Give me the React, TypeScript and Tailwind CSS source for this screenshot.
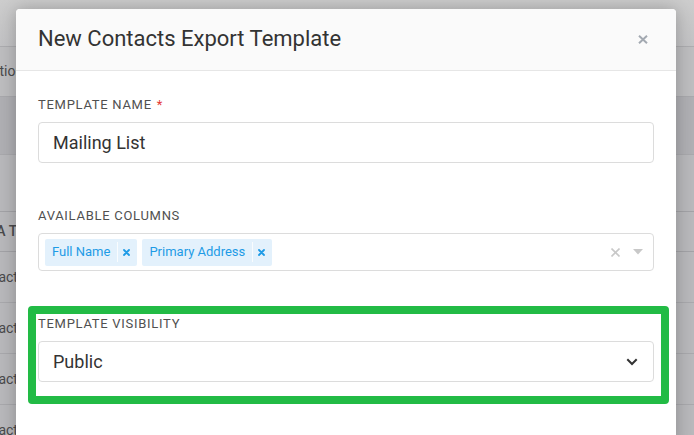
import React from 'react'

const rowText = 'text-[14px] text-[#4a4a4c] whitespace-nowrap'

const TagX = () => (
  <svg width="7" height="7" viewBox="0 0 7 7" className="block">
    <path d="M1 1 L6 6 M6 1 L1 6" stroke="#1e9be6" strokeWidth="1.8" strokeLinecap="round" />
  </svg>
)

const Tag: React.FC<{ label: string }> = ({ label }) => (
  <div className="flex h-[27px] items-center rounded-[2px] bg-[#e3f1fc] text-[13px] text-[#1e9be6]">
    <span className="pl-[7px] pr-[7px]">{label}</span>
    <span className="h-[20px] w-px bg-white/80" />
    <span className="pl-[5px] pr-[7px]">
      <TagX />
    </span>
  </div>
)

const FieldLabel: React.FC<{ children: React.ReactNode; required?: boolean }> = ({
  children,
  required,
}) => (
  <label className="mb-[9px] block text-[13px] leading-[16px] tracking-[0.055em] text-[#505050] uppercase">
    {children}
    {required && <span className="ml-[5px] text-[#e53935]">*</span>}
  </label>
)

export default function App() {
  return (
    <div className="relative h-[435px] w-[694px] overflow-hidden bg-[#b8b8bb] font-['Roboto','Liberation_Sans',sans-serif]">
      {/* page behind the overlay */}
      <div className="flex flex-col">
        <div className="h-[47px] bg-gradient-to-b from-[#cdcdcd] to-[#c3c3c5] border-b border-[#adadb0]" />
        <div className="flex h-[50px] items-center bg-[#bebec0] border-b border-[#a9a9ad]">
          <span className={`${rowText} -ml-[18px]`}>Options</span>
        </div>
        <div className="h-[58px] bg-[#b0b0b4] border-b border-[#a9a9ad]" />
        <div className="h-[57px] bg-[#b9b9bc] border-b border-[#a3a3a7]" />
        <div className="flex h-[40px] items-center bg-[#b9b9bc] border-b border-[#a3a3a7]">
          <span className={`${rowText} -ml-[29px] font-medium`}>DATA TYPE</span>
        </div>
        {[0, 1, 2, 3].map((i) => (
          <div
            key={i}
            className="flex h-[51px] items-center bg-[#b9b9bc] border-b border-[#a9a9ad]"
          >
            <span className={`${rowText} -ml-[31px]`}>Contact</span>
          </div>
        ))}
      </div>

      {/* modal */}
      <div className="absolute top-[9px] left-[16px] w-[660px] h-[440px] rounded-t-[4px] bg-white shadow-[0_0_18px_rgba(0,0,0,0.25)]">
        <div className="flex h-[62px] items-center justify-between rounded-t-[4px] border-b border-[#e6e6e6] bg-[#fafafa] pl-[22px] pr-[28px]">
          <h2 className="text-[22px] font-normal text-[#333] -mt-[3px]">
            New Contacts Export Template
          </h2>
          <svg width="10" height="9" viewBox="0 0 10 9" className="-mt-[1px]">
            <path d="M1 0.8 L9 8.2 M9 0.8 L1 8.2" stroke="#a3a9b1" strokeWidth="2" />
          </svg>
        </div>

        <div className="px-[22px] pt-[26px]">
          <FieldLabel required>Template Name</FieldLabel>
          <div className="flex h-[41px] items-center rounded-[4px] border border-[#dcdcdc] pl-[14px] text-[18px] text-[#333]">
            Mailing List
          </div>

          <div className="mt-[45px]">
            <FieldLabel>Available Columns</FieldLabel>
            <div className="flex h-[38px] items-center gap-[5px] rounded-[4px] border border-[#dcdcdc] pl-[6px] pr-[10px]">
              <Tag label="Full Name" />
              <Tag label="Primary Address" />
              <div className="ml-auto flex items-center gap-[13px]">
                <svg width="9" height="9" viewBox="0 0 9 9">
                  <path d="M0.5 0.5 L8.5 8.5 M8.5 0.5 L0.5 8.5" stroke="#c8c8c8" strokeWidth="1.6" />
                </svg>
                <svg width="10" height="6" viewBox="0 0 10 6">
                  <path d="M0 0 L10 0 L5 5.5 Z" fill="#c8c8c8" />
                </svg>
              </div>
            </div>
          </div>

          <div className="mt-[35px] -ml-[10px] -mr-[15px] rounded-[4px] border-8 border-[#22bb45] pt-[2px] pb-[14px] pl-[2px] pr-[7px]">
            <FieldLabel>Template Visibility</FieldLabel>
            <div className="flex h-[41px] items-center justify-between rounded-[4px] border border-[#dcdcdc] pl-[14px] pr-[15px] text-[18px] text-[#333]">
              <span>Public</span>
              <svg width="12" height="8" viewBox="0 0 12 8">
                <path d="M1.3 1.3 L6 6 L10.7 1.3" fill="none" stroke="#333" strokeWidth="2" />
              </svg>
            </div>
          </div>
        </div>
      </div>
    </div>
  )
}
